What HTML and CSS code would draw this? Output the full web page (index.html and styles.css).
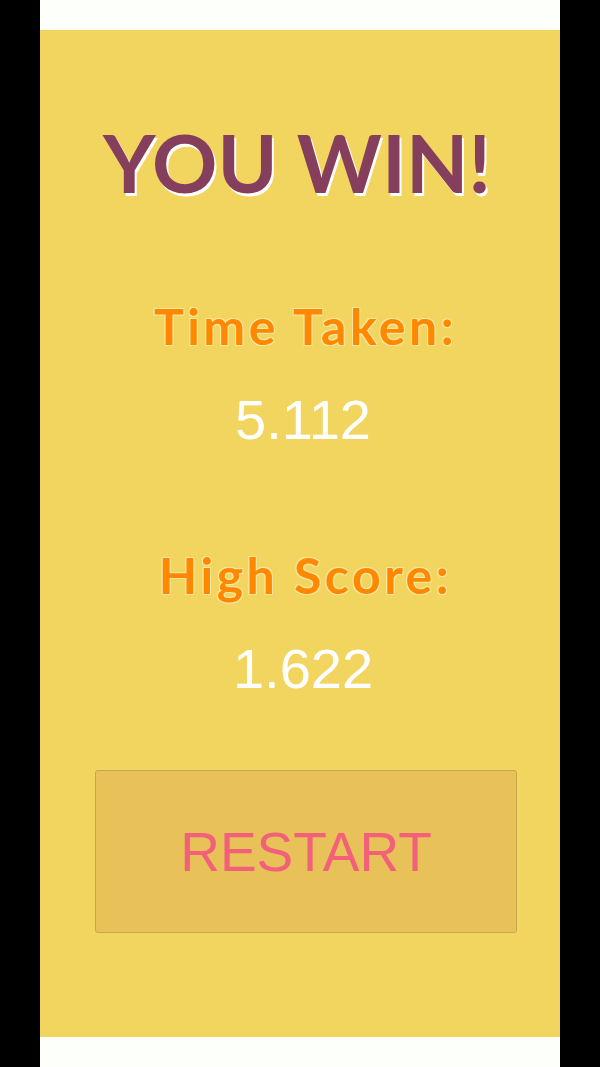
FILE: index.html
```html
<!DOCTYPE html>
<html>
<head>
<meta charset="utf-8">
<link rel="stylesheet" href="styles.css">
</head>
<body>
<div class="frame">
  <main class="panel">
    <h1 class="title">YOU WIN!</h1>
    <section class="stat">
      <div class="label">Time Taken:</div>
      <div class="value">5.112</div>
    </section>
    <section class="stat">
      <div class="label">High Score:</div>
      <div class="value">1.622</div>
    </section>
    <button class="restart">RESTART</button>
  </main>
</div>
</body>
</html>
```

FILE: styles.css
```css
html, body {
  margin: 0;
  padding: 0;
  background: #000;
}
.frame {
  width: 520px;
  height: 1067px;
  margin: 0 auto;
  background: #fdfffb;
  padding: 30px 0;
  box-sizing: border-box;
}
.panel {
  height: 1007px;
  background: #f2d55e;
  display: flex;
  flex-direction: column;
  align-items: center;
  padding-top: 92px;
  box-sizing: border-box;
}
.title {
  margin: 0 0 0 -6px;
  font-family: "Lato", sans-serif;
  font-weight: 700;
  font-size: 81px;
  line-height: 80px;
  color: #853e5c;
  text-shadow: 2px 3px 0 #ffffff;
}
.stat {
  display: flex;
  flex-direction: column;
  align-items: center;
  margin-top: 94px;
}
.stat + .stat { margin-top: 95px; }
.label {
  margin-left: 11px;
  font-family: "Lato", sans-serif;
  font-weight: 700;
  font-size: 50px;
  line-height: 60px;
  letter-spacing: 3.5px;
  color: #ff8800;
  text-shadow: 1px 1px 0 #f7e7a0, -1px -1px 0 #f7e7a0, 1px -1px 0 #f7e7a0, -1px 1px 0 #f7e7a0;
}
.value {
  margin-top: 34px;
  margin-left: 6px;
  font-family: "Liberation Sans", Arial, sans-serif;
  font-size: 56px;
  line-height: 60px;
  color: #ffffff;
}
.restart {
  margin-top: 71px;
  margin-left: 12px;
  width: 422px;
  height: 163px;
  background: #e8c258;
  border: 1px solid #c8a64c;
  border-radius: 3px;
  font-family: "Liberation Sans", Arial, sans-serif;
  font-size: 55px;
  color: #f2607a;
  padding: 0;
}
```
